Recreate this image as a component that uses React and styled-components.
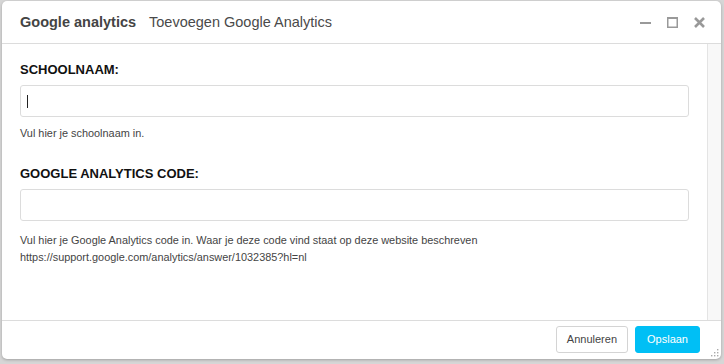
import React from "react";
import styled, { createGlobalStyle } from "styled-components";

const Global = createGlobalStyle`
  html, body { margin: 0; padding: 0; background: #d6d6d6; }
  body { font-family: "Liberation Sans", Arial, sans-serif; width: 724px; height: 364px; overflow: hidden; }
  * { box-sizing: border-box; }
`;

const Frame = styled.div`
  padding: 1px 3px 5px 2px;
  height: 364px;
`;

const Window = styled.div`
  position: relative;
  height: 358px;
  background: #fff;
  border-radius: 5px;
  box-shadow: 0 1px 3px rgba(0,0,0,0.25);
  display: flex;
  flex-direction: column;
  overflow: hidden;
`;

const Header = styled.div`
  height: 43px;
  flex: none;
  display: flex;
  align-items: center;
  padding: 0 18px;
  border-bottom: 1px solid #dcdcdc;
`;

const Title = styled.span`
  font-size: 14.5px;
  font-weight: ${p => (p.$bold ? 700 : 400)};
  color: ${p => (p.$bold ? "#444" : "#4a4a4a")};
  margin-right: ${p => (p.$bold ? "13px" : "0")};
`;

const Controls = styled.div`
  margin-left: auto;
  display: flex;
  align-items: center;
  gap: 16px;
  margin-right: -2px;
`;

const Body = styled.div`
  flex: 1;
  display: flex;
  min-height: 0;
`;

const Content = styled.div`
  flex: 1;
  padding: 18px 18px 0 18px;
`;

const Scrollbar = styled.div`
  width: 14px;
  flex: none;
  background: #f8f8f8;
  border-left: 1px solid #e4e4e4;
`;

const Label = styled.div`
  font-size: 13px;
  font-weight: 700;
  color: #111;
  line-height: 15px;
  margin-top: ${p => p.$top || "0"};
`;

const Input = styled.div`
  margin-top: 8px;
  height: 32px;
  border: 1px solid #dcdcdc;
  border-radius: 3px;
  display: flex;
  align-items: center;
  padding-left: 6px;
`;

const Caret = styled.span`
  width: 1px;
  height: 13px;
  background: #222;
`;

const Help = styled.div`
  font-size: 10.9px;
  color: #444;
  line-height: 17px;
  margin-top: ${p => p.$top || "8px"};
`;

const Footer = styled.div`
  height: 39px;
  flex: none;
  border-top: 1px solid #dcdcdc;
  display: flex;
  justify-content: flex-end;
  align-items: center;
  gap: 7px;
  padding: 0 21px 2px 0;
`;

const Button = styled.button`
  height: 27px;
  padding: 0 ${p => (p.$primary ? "11px" : "10px")};
  font-family: "Liberation Sans", Arial, sans-serif;
  font-size: 11px;
  border-radius: 3px;
  border: 1px solid ${p => (p.$primary ? "#00bff5" : "#d4d4d4")};
  background: ${p => (p.$primary ? "#00bff5" : "#fff")};
  color: ${p => (p.$primary ? "#fff" : "#444")};
  cursor: pointer;
`;

const Grip = styled.svg`
  position: absolute;
  right: 2px;
  bottom: 2px;
`;

export default function App() {
  return (
    <>
      <Global />
      <Frame>
        <Window>
          <Header>
            <Title $bold>Google analytics</Title>
            <Title>Toevoegen Google Analytics</Title>
            <Controls>
              <svg width="11" height="11" viewBox="0 0 11 11">
                <rect x="0" y="5" width="11" height="2" fill="#999" />
              </svg>
              <svg width="11" height="11" viewBox="0 0 11 11">
                <rect x="0.75" y="0.75" width="9.5" height="9.5" fill="none" stroke="#999" strokeWidth="1.5" />
                <rect x="0" y="0" width="11" height="2" fill="#999" />
              </svg>
              <svg width="11" height="11" viewBox="0 0 11 11">
                <path d="M1 1 L10 10 M10 1 L1 10" stroke="#999" strokeWidth="2.6" />
              </svg>
            </Controls>
          </Header>
          <Body>
            <Content>
              <Label>SCHOOLNAAM:</Label>
              <Input><Caret /></Input>
              <Help>Vul hier je schoolnaam in.</Help>
              <Label $top="24px">GOOGLE ANALYTICS CODE:</Label>
              <Input />
              <Help $top="11px">
                Vul hier je Google Analytics code in. Waar je deze code vind staat op deze website beschreven
                <br />
                https://support.google.com/analytics/answer/1032385?hl=nl
              </Help>
            </Content>
            <Scrollbar />
          </Body>
          <Footer>
            <Button>Annuleren</Button>
            <Button $primary>Opslaan</Button>
          </Footer>
          <Grip width="8" height="8" viewBox="0 0 8 8">
            <rect x="6" y="0" width="1.4" height="1.4" fill="#aaa" />
            <rect x="3" y="3" width="1.4" height="1.4" fill="#aaa" />
            <rect x="6" y="3" width="1.4" height="1.4" fill="#aaa" />
            <rect x="0" y="6" width="1.4" height="1.4" fill="#aaa" />
            <rect x="3" y="6" width="1.4" height="1.4" fill="#aaa" />
            <rect x="6" y="6" width="1.4" height="1.4" fill="#aaa" />
          </Grip>
        </Window>
      </Frame>
    </>
  );
}
